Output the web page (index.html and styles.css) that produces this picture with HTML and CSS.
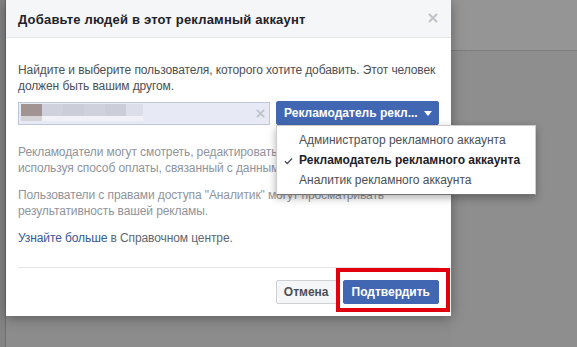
FILE: index.html
```html
<!DOCTYPE html>
<html lang="ru">
<head>
  <meta charset="UTF-8" />
  <title>Добавьте людей в этот рекламный аккаунт</title>
  <link rel="stylesheet" href="styles.css">
</head>
<body>
  <div class="page">
    <div class="left-strip"></div>

    <div class="dialog">
      <div class="dialog-header">
        <div class="dialog-title">Добавьте людей в этот рекламный аккаунт</div>
        <svg class="close" viewBox="0 0 10 10" width="10" height="10" aria-hidden="true">
          <path d="M1 1 L9 9 M9 1 L1 9" stroke="#bec2c9" stroke-width="2" fill="none" />
        </svg>
      </div>

      <div class="dialog-body">
        <p class="intro">Найдите и выберите пользователя, которого хотите добавить. Этот человек должен быть вашим другом.</p>

        <div class="picker">
          <div class="token-input">
            <div class="blur-name">
              <div class="blur-row">
                <span class="px px-photo"></span>
                <span class="px px-a"></span>
                <span class="px px-b"></span>
                <span class="px px-a"></span>
                <span class="px px-b"></span>
                <span class="px px-c"></span>
              </div>
              <div class="blur-row blur-row-low">
                <span class="px px-photo-low"></span>
                <span class="px px-low"></span>
              </div>
            </div>
            <svg class="clear" viewBox="0 0 10 10" width="9" height="9" aria-hidden="true">
              <path d="M1 1 L9 9 M9 1 L1 9" stroke="#bec2c9" stroke-width="2" fill="none" />
            </svg>
          </div>

          <div class="role-select">
            <div class="role-button">Рекламодатель рекл... <span class="caret"></span></div>
            <ul class="role-menu">
              <li class="role-item">Администратор рекламного аккаунта</li>
              <li class="role-item selected">
                <svg class="check" viewBox="0 0 10 8" width="9" height="8" aria-hidden="true">
                  <path d="M1 4.2 L3.6 6.8 L9 1.2" stroke="#4b4f56" stroke-width="1.4" fill="none" />
                </svg>
                Рекламодатель рекламного аккаунта
              </li>
              <li class="role-item">Аналитик рекламного аккаунта</li>
            </ul>
          </div>
        </div>

        <p class="note">Рекламодатели могут смотреть, редактировать и создавать рекламу, используя способ оплаты, связанный с данным рекламным аккаунтом.</p>
        <p class="note">Пользователи с правами доступа "Аналитик" могут просматривать результативность вашей рекламы.</p>
        <p class="help"><a href="#">Узнайте больше</a> в Справочном центре.</p>
      </div>

      <div class="dialog-footer">
        <button class="btn btn-cancel">Отмена</button>
        <button class="btn btn-confirm">Подтвердить</button>
        <div class="highlight"></div>
      </div>
    </div>

    <div class="right-area">
      <div class="right-bar"></div>
    </div>
  </div>
</body>
</html>
```

FILE: styles.css
```css
body {
  margin: 0;
  padding: 0;
  font-family: "Liberation Sans", Arial, sans-serif;
  font-size: 12px;
  color: #1d2129;
}
.page {
  display: flex;
  width: 577px;
  height: 347px;
  overflow: hidden;
  background: #8c8c8c;
}
.left-strip {
  width: 5px;
  flex: none;
  background: #838383;
  border-right: 1px solid #6e6e6e;
}
.right-area {
  flex: 1;
  background: #8e8e8e;
}
.right-bar {
  height: 50px;
  background: #959595;
  border-bottom: 1px solid #7d7d7d;
}

.dialog {
  position: relative;
  z-index: 2;
  width: 445px;
  flex: none;
  align-self: flex-start;
  background: #fff;
  box-shadow: 0 2px 12px rgba(0, 0, 0, 0.35);
}
.dialog-header {
  height: 37px;
  display: flex;
  align-items: center;
  justify-content: space-between;
  padding: 0 13px 0 12px;
  background: #f5f6f7;
  border-bottom: 1px solid #e5e5e5;
}
.dialog-title {
  font-size: 13px;
  font-weight: bold;
  letter-spacing: 0.2px;
  color: #1d2129;
  padding-top: 1px;
}
.close {
  display: block;
  margin-top: -1px;
}

.dialog-body {
  padding: 24px 12px 21px;
}
.dialog-body p {
  margin: 0 0 11px;
  line-height: 16px;
  letter-spacing: -0.1px;
}
.dialog-body p:last-child {
  margin-bottom: 0;
}
.intro {
  color: #4b4f56;
}
.note {
  color: #90949c;
}
.help {
  color: #606770;
}
.help a {
  color: #365899;
  text-decoration: none;
}

.picker {
  display: flex;
  align-items: center;
  gap: 6px;
  margin: -4px 0 19px;
}
.token-input {
  width: 249px;
  height: 21px;
  display: flex;
  align-items: center;
  justify-content: space-between;
  padding: 0 4px 0 2px;
  box-sizing: content-box;
  background: #e7eaf5;
  border: 1px solid #bdc7d8;
}
.blur-name {
  display: flex;
  flex-direction: column;
  align-self: flex-start;
  padding-top: 1px;
}
.blur-row {
  display: flex;
  height: 12px;
}
.blur-row-low {
  height: 5px;
}
.px {
  display: block;
  height: 100%;
}
.px-photo { width: 21px; background: #a19391; }
.px-a { width: 21px; background: #cfd2dc; }
.px-b { width: 21px; background: #cbced8; }
.px-c { width: 17px; background: #dcdfe9; }
.px-photo-low { width: 21px; background: #d6d3d8; }
.px-low { width: 101px; background: #f0f2f8; }
.clear {
  display: block;
}

.role-select {
  position: relative;
}
.role-button {
  height: 24px;
  width: 163px;
  box-sizing: border-box;
  display: flex;
  align-items: center;
  padding: 0 7px;
  gap: 6px;
  background: #4267b2;
  border: 1px solid #4267b2;
  border-radius: 2px;
  color: #fff;
  font-weight: bold;
  white-space: nowrap;
}
.caret {
  width: 0;
  height: 0;
  border-left: 4px solid transparent;
  border-right: 4px solid transparent;
  border-top: 5px solid #fff;
}
.role-menu {
  position: absolute;
  top: 24px;
  left: 0;
  width: 258px;
  margin: 0;
  padding: 4px 0;
  list-style: none;
  background: #fff;
  border: 1px solid rgba(0, 0, 0, 0.2);
  border-bottom-color: rgba(0, 0, 0, 0.55);
  box-shadow: 0 3px 8px rgba(0, 0, 0, 0.3);
  z-index: 3;
}
.role-item {
  position: relative;
  height: 20px;
  line-height: 20px;
  padding-left: 22px;
  color: #4b4f56;
  font-size: 12px;
  white-space: nowrap;
}
.role-item.selected {
  color: #1d2129;
  font-weight: bold;
}
.check {
  position: absolute;
  left: 7px;
  top: 7px;
}

.dialog-footer {
  position: relative;
  display: flex;
  justify-content: flex-end;
  gap: 6px;
  margin: 0 12px;
  padding: 12px 0;
  border-top: 1px solid #e5e5e5;
}
.btn {
  height: 24px;
  padding: 0 7px;
  font-family: "Liberation Sans", Arial, sans-serif;
  font-size: 12px;
  font-weight: bold;
  border-radius: 2px;
  cursor: pointer;
}
.btn-cancel {
  background: #f5f6f7;
  border: 1px solid #ced0d4;
  color: #4b4f56;
}
.btn-confirm {
  background: #4267b2;
  border: 1px solid #4267b2;
  color: #fff;
  padding: 0 8px;
}
.highlight {
  position: absolute;
  left: 318px;
  top: 0;
  width: 106px;
  height: 36px;
  border: 4px solid #e2000f;
  pointer-events: none;
}
```
